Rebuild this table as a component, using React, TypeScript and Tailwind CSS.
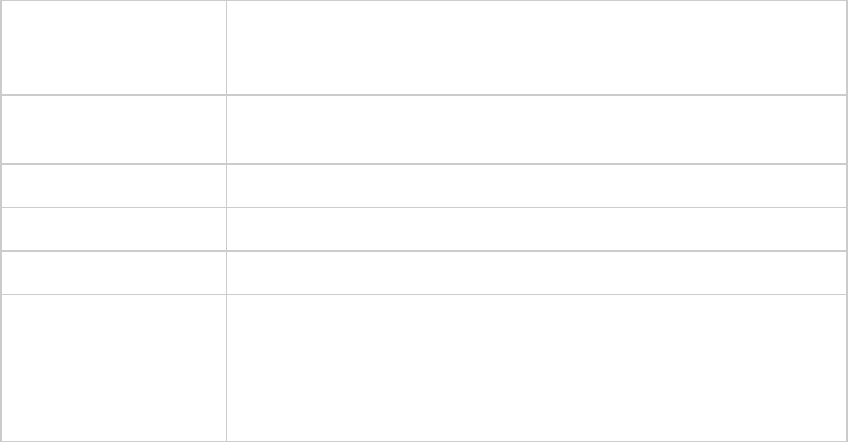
const rows = [
  { h: "h-[93px]", line: "border-b-2" },
  { h: "h-[67px]", line: "border-b-2" },
  { h: "h-[42px]", line: "border-b" },
  { h: "h-[42px]", line: "border-b-2" },
  { h: "h-[42px]", line: "border-b" },
  { h: "h-[146px]", line: "" },
];

export default function App() {
  return (
    <div className="w-[848px] h-[442px] bg-white font-['Liberation_Sans',sans-serif]">
      <div className="border-t border-b border-l-2 border-r-2 border-[#cccccc]">
        {rows.map((r, i) => (
          <div key={i} className={`flex border-[#cccccc] ${r.line}`}>
            <div className={`w-[225px] shrink-0 border-r border-[#cccccc] ${r.h}`} />
            <div className={`flex-1 ${r.h}`} />
          </div>
        ))}
      </div>
    </div>
  );
}
